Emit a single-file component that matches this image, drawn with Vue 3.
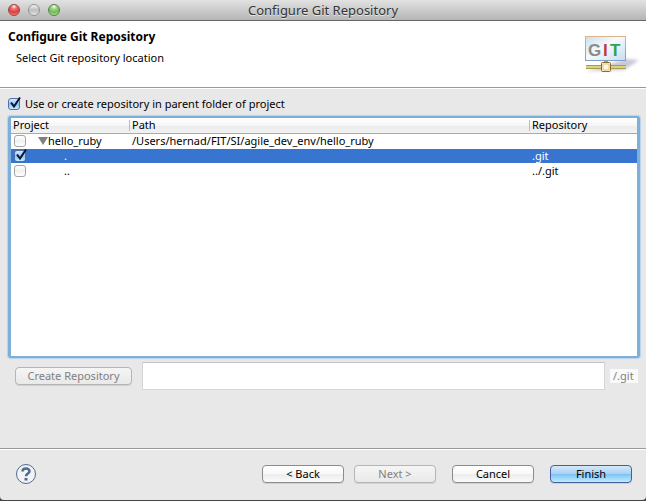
<script setup>
import { ref } from 'vue'

const useParent = ref(true)
const location = ref('')
const rows = ref([
  { project: 'hello_ruby', path: '/Users/hernad/FIT/SI/agile_dev_env/hello_ruby', repo: '', checked: false, root: true },
  { project: '.', path: '', repo: '.git', checked: true, root: false },
  { project: '..', path: '', repo: '../.git', checked: false, root: false },
])
const selected = ref(1)
</script>

<template>
  <main class="dialog">
    <header class="titlebar">
      <div class="lights">
        <button class="light red" aria-label="Close"></button>
        <button class="light grey" aria-label="Minimize"></button>
        <button class="light green" aria-label="Zoom"></button>
      </div>
      <span class="window-title">Configure Git Repository</span>
    </header>

    <section class="banner">
      <div>
        <h1>Configure Git Repository</h1>
        <p>Select Git repository location</p>
      </div>
      <svg class="logo" width="62" height="42" viewBox="0 0 62 42" aria-hidden="true">
        <defs>
          <linearGradient id="panel" x1="0" y1="0" x2="1" y2="1">
            <stop offset="0" stop-color="#c9dfee" />
            <stop offset=".45" stop-color="#f5fafd" />
            <stop offset="1" stop-color="#c8dcef" />
          </linearGradient>
          <linearGradient id="frame" x1="0" y1="0" x2="0" y2="1">
            <stop offset="0" stop-color="#dfb489" />
            <stop offset="1" stop-color="#7f9fc4" />
          </linearGradient>
          <linearGradient id="pipe" x1="0" y1="0" x2="0" y2="1">
            <stop offset="0" stop-color="#8b8530" />
            <stop offset=".5" stop-color="#f5eda0" />
            <stop offset="1" stop-color="#8b8530" />
          </linearGradient>
          <filter id="soft" x="-20%" y="-20%" width="140%" height="140%">
            <feGaussianBlur stdDeviation="1.5" />
          </filter>
        </defs>
        <path d="M4 37 L44 25 L57 26 L42 36 Z" fill="#c9c7d6" filter="url(#soft)" />
        <rect x="3.500" y="2.500" width="40" height="24" fill="url(#panel)" stroke="url(#frame)" />
        <text class="g" x="6" y="22">G</text>
        <text class="i" x="21" y="22">I</text>
        <text class="t" x="28" y="22">T</text>
        <path d="M22 27h4v2h-4z" fill="#b0a558" />
        <rect x="4" y="31" width="40" height="4" fill="url(#pipe)" />
        <rect x="19.500" y="28.500" width="9" height="9" rx="1" fill="#fff0ca" stroke="#8c6c2b" />
        <rect x="21" y="30" width="6" height="6" fill="#fff8e4" stroke="#e0c48b" />
      </svg>
    </section>

    <section class="body">
      <label class="parent">
        <span class="check">
          <input v-model="useParent" type="checkbox" />
          <svg v-if="useParent" viewBox="0 0 14 14"><path d="M3 6.500 L6 10.500 L12 1.500" /></svg>
        </span>
        <span>Use or create repository in parent folder of project</span>
      </label>

      <div class="tree">
        <table>
          <colgroup>
            <col class="c-project" />
            <col class="c-path" />
            <col />
          </colgroup>
          <thead>
            <tr>
              <th><span>Project</span></th>
              <th><span>Path</span></th>
              <th><span>Repository</span></th>
            </tr>
          </thead>
          <tbody>
            <tr v-for="(row, i) in rows" :key="row.project" :class="{ selected: i === selected }" @click="selected = i">
              <td>
                <div class="cell" :class="{ child: !row.root }">
                  <span class="check">
                    <input v-model="row.checked" type="checkbox" :aria-label="row.project" />
                    <svg v-if="row.checked" viewBox="0 0 14 14"><path d="M3 6.500 L6 10.500 L12 1.500" /></svg>
                  </span>
                  <svg v-if="row.root" class="twisty" viewBox="0 0 10 8"><path d="M0 0h10L5 8z" /></svg>
                  <span>{{ row.project }}</span>
                </div>
              </td>
              <td>{{ row.path }}</td>
              <td>{{ row.repo }}</td>
            </tr>
          </tbody>
        </table>
      </div>

      <div class="create">
        <button class="btn create-btn" disabled>Create Repository</button>
        <input id="location" v-model="location" type="text" aria-label="Repository location" disabled />
        <label class="suffix" for="location">/.git</label>
      </div>
    </section>

    <footer class="actions">
      <button class="help" aria-label="Help">
        <svg viewBox="0 0 22 22">
          <circle cx="11" cy="11" r="9.500" />
          <path d="M7.500 8.500C7.500 4.500 14.500 4.500 14.500 8.300C14.500 10.500 11 10.500 11 13.300" />
          <path class="dot" d="M9.500 15h3v2.500h-3z" />
        </svg>
      </button>
      <div class="nav">
        <button class="btn">&lt; Back</button>
        <button class="btn" disabled>Next &gt;</button>
      </div>
      <button class="btn">Cancel</button>
      <button class="btn primary">Finish</button>
    </footer>
  </main>
</template>

<style>
body {
  margin: 0;
  background: #444;
}
</style>

<style scoped>
* {
  box-sizing: border-box;
}
.dialog {
  display: flex;
  flex-direction: column;
  min-height: calc(100vh - 1px);
  background: #e8e8e8;
  border-radius: 0 0 4px 4px;
  overflow: hidden;
  color: #000;
  font-family: "Noto Sans", "Open Sans", sans-serif;
  font-size: 11px;
  line-height: 14px;
}
button,
input {
  font: inherit;
  margin: 0;
}
.titlebar {
  display: grid;
  grid-template-columns: 1fr auto 1fr;
  align-items: center;
  height: 21px;
  padding: 0 8px;
  background: linear-gradient(#e2e2e2, #b5b5b5);
  border-bottom: 1px solid #686868;
}
.lights {
  display: flex;
  gap: 8px;
}
.light {
  width: 12px;
  height: 12px;
  padding: 0;
  border: 1px solid #888;
  border-radius: 50%;
}
.red {
  border-color: #9c4340;
  background: radial-gradient(circle at 50% 15%, #fff 0, #ee7774 25%, #e13b3d 60%, #ffa39c 100%);
}
.grey {
  border-color: #929292;
  background: linear-gradient(#f4f4f4, #bcbcbc 50%, #e6e6e6);
}
.green {
  border-color: #4f8641;
  background: radial-gradient(circle at 50% 15%, #fff 0, #a8d792 25%, #70b958 60%, #ccf5ac 100%);
}
.window-title {
  font-size: 13px;
  color: #333;
  text-shadow: 0 1px 0 #e6e6e6;
}
.banner {
  display: flex;
  justify-content: space-between;
  align-items: flex-start;
  height: 67px;
  padding: 8px 2px 0 8px;
  background: #fff;
  border-bottom: 1px solid #999;
}
h1 {
  margin: 0;
  font-size: 12px;
  line-height: 16px;
  font-weight: 700;
}
p {
  margin: 6px 0 0 8px;
}
.logo {
  margin-top: 5px;
}
.logo text {
  font-family: "Liberation Sans", sans-serif;
  font-size: 17px;
  font-weight: 700;
}
.g {
  fill: #8b8b8b;
}
.i {
  fill: #bd3945;
}
.t {
  fill: #31a255;
}
.body {
  display: flex;
  flex: 1;
  flex-direction: column;
  padding: 8px 8px 58px;
  border-top: 1px solid #fff;
}
.parent {
  display: flex;
  align-items: center;
  gap: 5px;
  height: 14px;
  margin-bottom: 5px;
}
.check {
  position: relative;
  display: block;
  flex: none;
  width: 12px;
  height: 12px;
}
.check input {
  display: block;
  width: 12px;
  height: 12px;
  appearance: none;
  border: 1px solid #a5a5a5;
  border-radius: 3px;
  background: linear-gradient(#fff, #f0f0f0 50%, #fff);
}
.check input:checked {
  border-color: #4f6eaa;
  background: linear-gradient(#d9e9fa, #8fc2ef 55%, #c5f1ff);
}
.check svg {
  position: absolute;
  left: 0;
  bottom: 0;
  width: 14px;
  height: 14px;
  fill: none;
  stroke: #0a1430;
  stroke-width: 2;
  pointer-events: none;
}
.tree {
  flex: 1;
  margin-right: -2px;
  border: 3px solid #7eafd9;
  border-width: 2px 3px;
  border-radius: 3px;
  background: #fff;
  box-shadow: 0 0 1px 1px #b8d3ea;
}
table {
  width: 100%;
  table-layout: fixed;
  border-collapse: separate;
  border-spacing: 0;
}
.c-project {
  width: 119px;
}
.c-path {
  width: 400px;
}
th {
  height: 16px;
  padding: 0;
  border-bottom: 1px solid #aaa;
  background: linear-gradient(#fff 0, #f6f6f6 50%, #ebebeb 50%, #f2f2f2);
  font-weight: 400;
  text-align: left;
}
th span {
  display: block;
  height: 11px;
  padding-left: 2px;
  border-right: 1px solid #bbb;
  line-height: 10px;
}
th:last-child span {
  border-right: 0;
}
td {
  height: 15px;
  padding: 0 0 0 2px;
  border-bottom: 1px solid #fff;
  line-height: 14px;
  white-space: nowrap;
}
.selected {
  background: #3875d0;
  color: #fff;
}
.cell {
  display: flex;
  align-items: center;
  height: 14px;
  padding-left: 1px;
}
.child {
  gap: 38px;
}
.twisty {
  width: 10px;
  height: 8px;
  margin-left: 12px;
  fill: #808080;
}
.create {
  display: flex;
  align-items: center;
  margin-top: 4px;
  padding-left: 7px;
}
.btn {
  width: 82px;
  height: 18px;
  padding: 0;
  border: 1px solid #8c8c8c;
  border-radius: 4px;
  background: linear-gradient(#fff 0, #f8f8f8 50%, #ececec 50%, #fafafa);
  color: #000;
  line-height: 16px;
  white-space: nowrap;
  box-shadow: 0 1px 0 #d0d0d0;
}
.btn:disabled {
  border-color: #b5b5b5;
  background: linear-gradient(#f5f5f5, #e9e9e9);
  color: #808080;
}
.create-btn {
  width: 117px;
}
.create input {
  flex: 1;
  min-width: 0;
  height: 28px;
  margin: 0 5px 0 10px;
  border: 1px solid #d5d5d5;
  border-top-color: #c4c4c4;
  background: #fff;
}
.suffix {
  min-width: 28px;
  height: 14px;
  padding: 0 3px;
  background: #fafafa;
  color: #808080;
  line-height: 14px;
}
.actions {
  display: flex;
  align-items: center;
  gap: 16px;
  height: 52px;
  padding: 0 14px 2px 15px;
  border-top: 1px solid #999;
  box-shadow: inset 0 1px 0 #fff;
}
.help {
  width: 22px;
  height: 22px;
  margin-right: auto;
  padding: 0;
  border: 0;
  background: none;
}
.help svg {
  display: block;
  fill: none;
  stroke: #536a8b;
}
.help circle {
  fill: #f1f3f6;
}
.help path {
  stroke-width: 2.500;
}
.help .dot {
  fill: #536a8b;
  stroke: none;
}
.nav {
  display: flex;
  gap: 10px;
}
.primary {
  border-color: #4a5c9c;
  background: linear-gradient(#d5e8fa 0, #a5d0f5 50%, #7fbff3 50%, #b8f0ff);
}
.primary:active {
  background: linear-gradient(#a5d0f5, #7fbff3);
}
</style>
